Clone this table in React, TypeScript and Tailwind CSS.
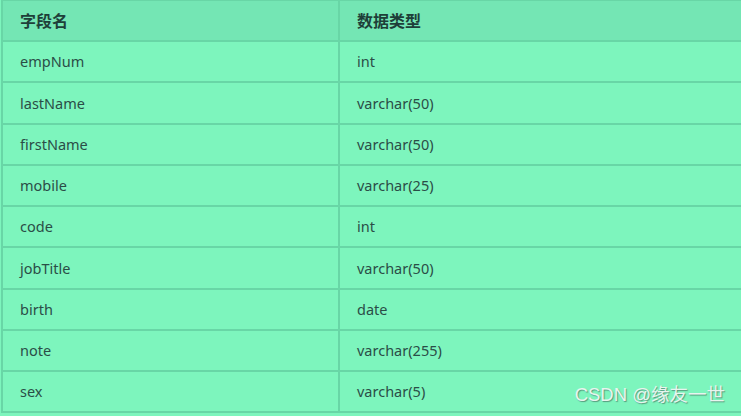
const rows: [string, string][] = [
  ['empNum', 'int'],
  ['lastName', 'varchar(50)'],
  ['firstName', 'varchar(50)'],
  ['mobile', 'varchar(25)'],
  ['code', 'int'],
  ['jobTitle', 'varchar(50)'],
  ['birth', 'date'],
  ['note', 'varchar(255)'],
  ['sex', 'varchar(5)'],
];

export default function App() {
  return (
    <div
      className="relative w-[741px] h-[416px] overflow-hidden bg-[#7df5bd] text-[#2b4d47]"
      style={{ fontFamily: '"Noto Sans", "Noto Sans CJK SC", sans-serif' }}
    >
      <div className="ml-px w-[760px] border-l-2 border-t border-[#68d6a6]">
        <div className="flex h-[41px] border-b-2 border-[#68d6a6] bg-[#74e6b4] font-bold text-[16px] text-[#1e3f39]">
          <div className="w-[337px] border-r-2 border-[#68d6a6] flex items-center pl-[17px]">字段名</div>
          <div className="flex-1 flex items-center pl-[17px]">数据类型</div>
        </div>
        {rows.map(([name, type]) => (
          <div key={name} className="flex h-[41.25px] border-b-2 border-[#68d6a6] text-[14.5px]">
            <div className="w-[337px] border-r-2 border-[#68d6a6] flex items-center pl-[17px] pt-px">{name}</div>
            <div className="flex-1 flex items-center pl-[17px] pt-px">{type}</div>
          </div>
        ))}
      </div>
      <div
        className="absolute right-[16px] bottom-[7px] text-[18.5px] text-[#e8f5ef] [text-shadow:1px_1px_1px_rgba(60,90,80,0.6)]"
        style={{ fontFamily: '"Liberation Sans", "Noto Sans CJK SC", sans-serif' }}
      >
        CSDN @缘友一世
      </div>
    </div>
  );
}
